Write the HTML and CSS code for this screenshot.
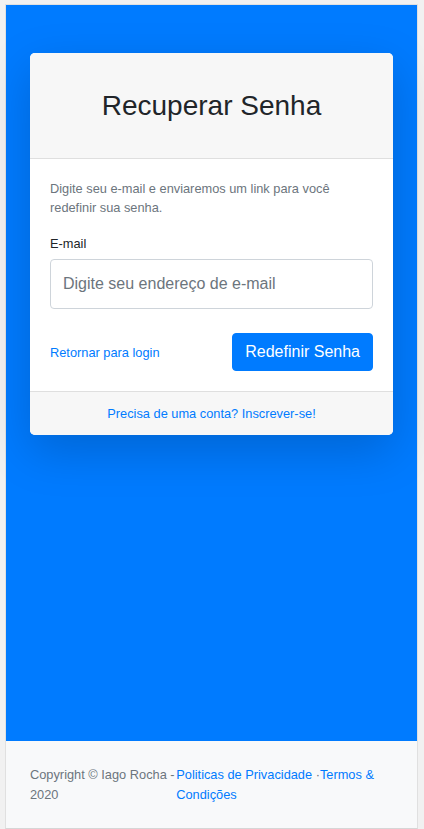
FILE: index.html
```html
<!DOCTYPE html>
<html lang="pt-BR">
<head>
<meta charset="utf-8">
<title>Recuperar Senha</title>
<link rel="stylesheet" href="styles.css">
</head>
<body>
<div class="frame">
  <main class="hero">
    <div class="card">
      <div class="card-header">
        <h3 class="title">Recuperar Senha</h3>
      </div>
      <div class="card-body">
        <div class="intro">Digite seu e-mail e enviaremos um link para você redefinir sua senha.</div>
        <form class="form">
          <label class="label" for="email">E-mail</label>
          <input class="input" id="email" type="email" placeholder="Digite seu endereço de e-mail">
          <div class="actions">
            <a class="small-link" href="#">Retornar para login</a>
            <a class="btn" href="#">Redefinir Senha</a>
          </div>
        </form>
      </div>
      <div class="card-footer">
        <a class="small-link" href="#">Precisa de uma conta? Inscrever-se!</a>
      </div>
    </div>
  </main>
  <footer class="footer">
    <div class="copy">Copyright © Iago Rocha - 2020</div>
    <div class="links"><a href="#">Politicas de Privacidade</a> ·<a href="#">Termos &amp; Condições</a></div>
  </footer>
</div>
</body>
</html>
```
FILE: styles.css
```css
* { box-sizing: border-box; }
html, body { margin: 0; }
body {
  background: #f1f1f1;
  padding: 4px 6px 0 5px;
  font-family: "Liberation Sans", Arial, sans-serif;
  color: #212529;
  font-size: 16px;
  line-height: 1.5;
}
.frame {
  border: 1px solid #e0e0e0;
  border-bottom: 1px solid #d6d6d6;
  height: 825px;
  display: flex;
  flex-direction: column;
}
.hero {
  flex: 1;
  background: #007bff;
  padding: 48px 24px 0;
}
.card {
  background: #fff;
  border-radius: 5px;
  box-shadow: 0 16px 48px rgba(0, 0, 0, 0.175);
  overflow: hidden;
}
.card-header {
  background: #f7f7f7;
  border-bottom: 1px solid #dfdfdf;
  padding: 12px 20px;
}
.title {
  margin: 24px 0;
  text-align: center;
  font-size: 28px;
  font-weight: 300;
  line-height: 33px;
  color: #212529;
}
.card-body { padding: 20px; }
.intro {
  font-size: 12.8px;
  line-height: 19.2px;
  color: #6c757d;
  margin-bottom: 16px;
}
.form { display: flex; flex-direction: column; }
.label {
  font-size: 12.8px;
  line-height: 22px;
  margin-bottom: 4px;
}
.input {
  height: 50px;
  padding: 12px 12px;
  font: inherit;
  font-size: 16px;
  border: 1px solid #ced4da;
  border-radius: 4px;
  color: #495057;
}
.input::placeholder { color: #6c757d; opacity: 1; }
.actions {
  margin-top: 24px;
  display: flex;
  align-items: center;
  justify-content: space-between;
}
.small-link {
  font-size: 12.8px;
  line-height: 19.2px;
  color: #007bff;
  text-decoration: none;
}
.btn {
  display: inline-block;
  background: #007bff;
  color: #fff;
  border: 1px solid #007bff;
  border-radius: 4px;
  padding: 6px 12px;
  font-size: 16px;
  line-height: 24px;
  text-decoration: none;
}
.card-footer {
  background: #f7f7f7;
  border-top: 1px solid #dfdfdf;
  padding: 12px 20px;
  text-align: center;
  font-size: 12.8px;
  line-height: 19px;
}
.card-footer .small-link { line-height: 19px; }
.footer {
  background: #f8f9fa;
  padding: 24px 24px;
  height: 87px;
  display: flex;
  align-items: center;
  justify-content: space-between;
  font-size: 12.8px;
  line-height: 19.2px;
}
.copy { color: #6c757d; }
.links a { color: #007bff; text-decoration: none; }
.links { color: #6c757d; }
```
